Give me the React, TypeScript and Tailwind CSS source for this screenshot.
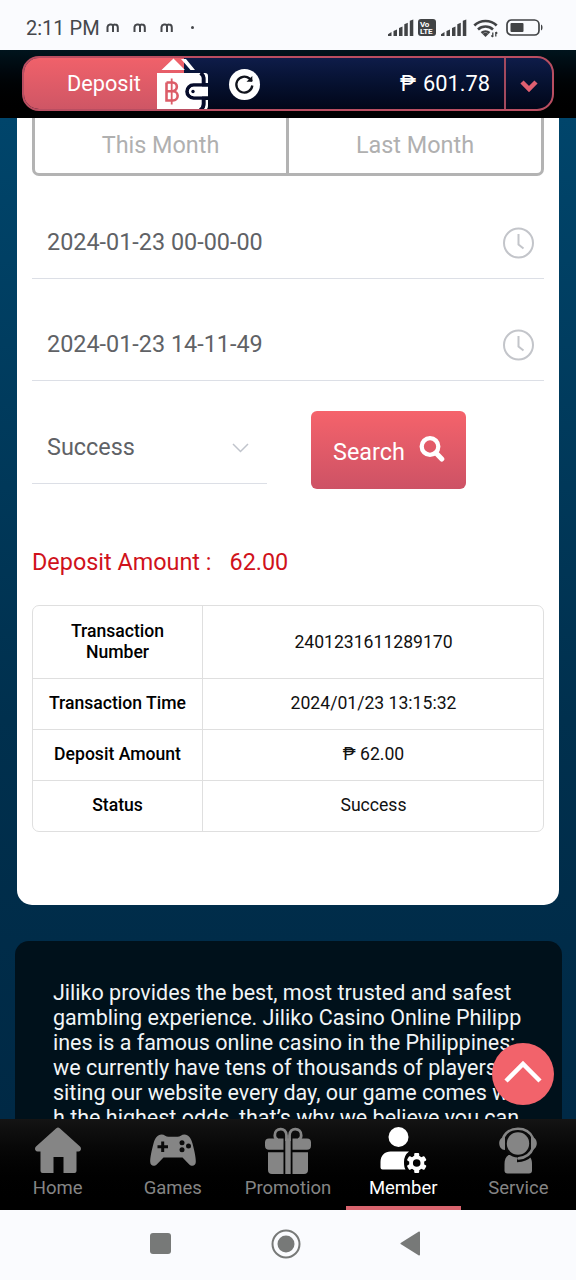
import React from 'react';

const tabs = [
  { label: 'Home', icon: HomeIcon },
  { label: 'Games', icon: GamesIcon },
  { label: 'Promotion', icon: GiftIcon },
  { label: 'Member', icon: MemberIcon, active: true },
  { label: 'Service', icon: ServiceIcon }
];

const rows = [
  { label: 'Transaction Number', value: '2401231611289170', height: 'h-[72px]' },
  { label: 'Transaction Time', value: '2024/01/23 13:15:32', height: 'h-[51px]' },
  { label: 'Deposit Amount', value: '₱ 62.00', height: 'h-[51px]' },
  { label: 'Status', value: 'Success', height: 'h-[51px]' }
];

const aboutLines = [
  'Jiliko provides the best, most trusted and safest',
  'gambling experience. Jiliko Casino Online Philipp',
  'ines is a famous online casino in the Philippines;',
  'we currently have tens of thousands of players vi',
  'siting our website every day, our game comes wit',
  'h the highest odds, that’s why we believe you can'
];

function HomeIcon() {
  return (
    <svg width="48" height="48" viewBox="0 0 48 48" fill="currentColor">
      <path d="M22.300 1.300a2.500 2.500 0 0 1 3.400 0L46 19.500c1.700 1.600 1.200 5-1.500 5H42.500V44a2 2 0 0 1-2 2H29.500V30h-10v16H8.500a2 2 0 0 1-2-2V24.500H3.500c-2.700 0-3.200-3.400-1.500-5Z" />
    </svg>
  );
}

function GamesIcon() {
  return (
    <svg width="48" height="48" viewBox="0 0 48 48">
      <path fill="currentColor" d="M12.500 7.500c3 0 4.500 2.300 7 2.300h9c2.500 0 4-2.300 7-2.300 4 0 6.500 3.500 8 9 1.700 6.500 3.500 14 3.300 18.500-.2 4-4 5-6.800 2.200L33.500 30.500h-19L8 37.200c-2.800 2.800-6.600 1.800-6.800-2.200C1 30.500 2.800 23 4.500 16.500c1.500-5.500 4-9 8-9Z" />
      <path stroke="#0b0b0b" strokeWidth="3" d="M13.700 14.500v10.500M8.500 19.800h10.500" />
      <g fill="#0b0b0b">
        <circle cx="33" cy="15.700" r="2.500" />
        <circle cx="33" cy="22.800" r="2.500" />
        <circle cx="39.500" cy="19" r="2.500" />
      </g>
    </svg>
  );
}

function GiftIcon() {
  return (
    <svg width="48" height="48" viewBox="0 0 48 48" fill="currentColor">
      <path fill="none" stroke="currentColor" strokeWidth="2.800" d="M22.500 14V8.500c0-9-12-8-11.700 0 0 2 1 3.500 3 4M25.500 14V8.500c0-9 12-8 11.700 0 0 2-1 3.500-3 4" />
      <path d="M5 11.500h14.500v11.300H5a4 4 0 0 1-4-4v-3.300a4 4 0 0 1 4-4ZM28.500 11.500H43a4 4 0 0 1 4 4v3.300a4 4 0 0 1-4 4H28.500ZM4 25.300h15.500V47H8a4 4 0 0 1-4-4ZM28.500 25.300H44V43a4 4 0 0 1-4 4H28.500ZM21.300 11.500h5.400V47h-5.400Z" />
    </svg>
  );
}

function MemberIcon() {
  return (
    <svg width="48" height="48" viewBox="0 0 48 48">
      <circle cx="19.500" cy="10" r="10" fill="currentColor" />
      <path fill="currentColor" d="M11.500 24.500H30a13 13 0 0 0-5 10.500c0 3 .3 5.500 1.500 7.500H3.500a2 2 0 0 1-2-2v-5.500c0-6.500 4.500-10.500 10-10.500Z" />
      <g transform="translate(37.700 36)" fill="currentColor">
        <circle r="5.700" fill="none" stroke="currentColor" strokeWidth="3.800" />
        <rect x="-2.500" y="-10" width="5" height="5" rx="1" />
        <rect x="-2.500" y="-10" width="5" height="5" rx="1" transform="rotate(60)" />
        <rect x="-2.500" y="-10" width="5" height="5" rx="1" transform="rotate(120)" />
        <rect x="-2.500" y="-10" width="5" height="5" rx="1" transform="rotate(180)" />
        <rect x="-2.500" y="-10" width="5" height="5" rx="1" transform="rotate(240)" />
        <rect x="-2.500" y="-10" width="5" height="5" rx="1" transform="rotate(300)" />
      </g>
    </svg>
  );
}

function ServiceIcon() {
  return (
    <svg width="48" height="48" viewBox="0 0 48 48">
      <path fill="currentColor" d="M14.500 28h19c3.500 2 4.500 5 4.500 9v6.500a3 3 0 0 1-3 3H13.500a3 3 0 0 1-3-3V37c0-4 1-7 4-9Z" />
      <circle cx="24" cy="16.500" r="14" fill="#0b0b0b" />
      <circle cx="24" cy="16.500" r="11.200" fill="currentColor" />
      <path fill="none" stroke="currentColor" strokeWidth="2.400" d="M9 11C12 4.500 17.500 1.700 24 1.700S36 4.500 39 11" />
      <path fill="currentColor" d="M11 9.500v13.500C7.500 23 5.200 20 5.200 16.300S7.500 10 11 9.500ZM37 9.500v13.500c3.500 0 5.800-3 5.800-6.700S40.500 10 37 9.500Z" />
      <path fill="none" stroke="#080808" strokeWidth="6.500" d="M35.500 27c-3 3.500-6.500 5-12.500 5" />
      <path fill="none" stroke="currentColor" strokeWidth="2.700" strokeLinecap="round" d="M39 21c-2.500 6.500-7 9.800-14.500 10.300" />
    </svg>
  );
}

function WalletIcon() {
  return (
    <svg width="52" height="52" viewBox="0 0 52 52">
      <path fill="#fff" d="M16.500.500 28 12H4.500ZM24 1h5l9 11h-4.500Z" />
      <path fill="#fff" d="M0 15h43a3 3 0 0 1 2 1v36H0Z" />
      <path fill="#fff" d="M46 15h2a3 3 0 0 1 3 3v7h-2.500v-4c0-3-1-4.500-2.500-6ZM48.500 42H51v6a4 4 0 0 1-4 4h-1c2-2 2.500-4 2.500-6Z" />
      <path fill="none" stroke="#060c2b" strokeWidth="3.600" d="M43.500 15c2 1.500 3 3 3 5v7H36.500a6.500 6.500 0 0 0 0 13h10v6c0 3-1 4.500-3.500 6" />
      <path fill="#fff" d="M37 28.800h14v9.400H37a4.700 4.700 0 0 1 0-9.400Z" />
      <circle cx="36" cy="33.500" r="1.700" fill="#060c2b" />
      <path fill="none" stroke="#dc5d68" strokeWidth="2.600" d="M9.500 24.500h6a4.300 4.300 0 0 1 0 8.700H9.500h6.500a4.600 4.600 0 0 1 0 9.300H9.500V24.500" />
      <path stroke="#dc5d68" strokeWidth="1.800" d="M14.700 20.500v26" />
    </svg>
  );
}

function SignalIcon() {
  return (
    <svg width="26" height="17" viewBox="0 0 26 17" fill="#414345">
      <path d="M0 17v-1.700l3.500-2.300V17ZM5.500 17v-5L9 10.500V17ZM11 17V9l3.500-1.500V17ZM16.300 17V5.300l3.500-1.500V17ZM21.800 17V1.700L25.300.500V17Z" />
    </svg>
  );
}

function StatusBar() {
  return (
    <div className="h-[50px] shrink-0 bg-[#fafbfe] flex items-center justify-between pl-[26px] pr-[32px] pt-[5px] text-[#45474b]">
      <div className="flex items-center">
        <span className="text-[20px] w-[80px] whitespace-nowrap">2:11 PM</span>
        {[0, 1, 2].map((i) => (
          <svg key={i} className="mr-[14px]" width="13" height="9" viewBox="0 0 13 9" fill="none" stroke="#45474b" strokeWidth="2">
            <path d="M1.500 9V4a3 3 0 0 1 2.500-2.500h1A2 2 0 0 1 7 4v5M7 4a2 2 0 0 1 2-2.500c2 0 2.800 1 2.800 3V9" />
          </svg>
        ))}
        <span className="w-[3px] h-[3px] rounded-full bg-[#45474b] ml-[4px]" />
      </div>
      <div className="flex items-center">
        <SignalIcon />
        <span className="ml-1 w-[18px] h-[17px] rounded-[3px] bg-[#414345] text-white text-[8px] leading-[7px] font-bold flex flex-col justify-center pl-[2px] tracking-tight">
          <span>Vo</span>
          <span>LTE</span>
        </span>
        <span className="ml-[5px]"><SignalIcon /></span>
        <svg className="ml-[6px]" width="26" height="20" viewBox="0 0 26 20" fill="none" stroke="#414345" strokeWidth="2.600">
          <path d="M1.300 7.500a16 16 0 0 1 22.400 0M5 11.500a11 11 0 0 1 15 0M8.500 15a6 6 0 0 1 8 0" />
          <path fill="#414345" stroke="none" d="m12.500 19-3-3a4 4 0 0 1 6 0Z" />
          <path strokeWidth="1.300" d="M19.800 19v-4.500M22.800 14v4.500M18.300 17.500l1.500 1.500M22.800 14l1.500 1.500" />
        </svg>
        <svg className="ml-[7px]" width="38" height="17" viewBox="0 0 38 17">
          <rect x="1" y="1" width="32" height="15" rx="4.500" fill="none" stroke="#414345" strokeWidth="1.700" />
          <rect x="4.500" y="4" width="13" height="9" rx="1" fill="#414345" />
          <path d="M35 5.500c2 .5 2 5.500 0 6Z" fill="#414345" />
        </svg>
      </div>
    </div>
  );
}

function BalanceBar() {
  return (
    <header className="h-[68px] shrink-0 bg-gradient-to-b from-[#00141d] to-black pt-[6px] pl-[22px] pr-[22px]">
      <div className="relative h-[55px] flex items-center rounded-[17px] border-2 border-[#b94e61] bg-gradient-to-b from-[#0e1c49] to-[#020719] overflow-hidden">
        <div className="h-full w-[160px] bg-gradient-to-b from-[#f0616a] to-[#cf5665] pl-[43px] flex items-center pt-[2px] text-[21.700px] text-white">
          Deposit
        </div>
        <div className="absolute left-[133px] top-0">
          <WalletIcon />
        </div>
        <div className="ml-[45px] mt-px w-[31px] h-[31px] rounded-full bg-white flex items-center justify-center">
          <svg width="21" height="21" viewBox="0 0 21 21" fill="none" stroke="#10131c" strokeWidth="2.300">
            <path d="M18.300 11.500A8 8 0 1 1 15.500 4.500L18 7" />
            <path d="M18.300 2v5.800H12.500Z" fill="#10131c" stroke="none" />
          </svg>
        </div>
        <div className="ml-auto mr-[14px] pt-[2px] text-[21.800px] text-white whitespace-nowrap flex">
          <span className="mr-[7px]">₱</span>
          <span>601.78</span>
        </div>
        <div className="h-full w-[48px] border-l-2 border-[#a2495e] flex items-center justify-center pt-1">
          <svg width="18" height="14" viewBox="0 0 18 14" fill="none" stroke="#e05f70" strokeWidth="4.500">
            <path d="m2 3 7 7 7-7" />
          </svg>
        </div>
      </div>
    </header>
  );
}

function DateField({ value }: { value: string }) {
  return (
    <div className="h-[72px] border-b border-[#dcdfe6] flex items-center justify-between pl-[15px] pr-[9px] text-[23.400px] text-[#606266]">
      <span>{value}</span>
      <svg width="33" height="33" viewBox="0 0 33 33" fill="none" stroke="#c3c5ca" strokeWidth="2">
        <circle cx="16.500" cy="17" r="14.500" />
        <path d="M16.500 8V18.500l5 4" />
      </svg>
    </div>
  );
}

function RecordPanel() {
  return (
    <section className="h-[787px] mx-[17px] bg-white rounded-b-[15px] px-[15px]">
      <div className="h-[58px] flex border-[3px] border-t-0 border-[#b3b3b3] rounded-b-[7px] text-[23.400px] text-[#b0b0b0] text-center leading-[54px]">
        <div className="w-[254px] border-r-[3px] border-[#b3b3b3]">This Month</div>
        <div className="flex-1">Last Month</div>
      </div>
      <div className="mt-[31px]">
        <DateField value="2024-01-23 00-00-00" />
      </div>
      <div className="mt-[30px]">
        <DateField value="2024-01-23 14-11-49" />
      </div>
      <div className="mt-[30px] flex items-start">
        <div className="w-[235px] h-[73px] border-b border-[#dcdfe6] flex items-center justify-between pl-[15px] pr-[18px] pt-px text-[23.400px] text-[#606266]">
          <span>Success</span>
          <svg width="17" height="10" viewBox="0 0 17 10" fill="none" stroke="#c0c4cc" strokeWidth="1.500">
            <path d="m1 1 7.500 7.500L16 1" />
          </svg>
        </div>
        <button className="ml-[44px] w-[155px] h-[78px] rounded-[6px] bg-gradient-to-b from-[#f5636b] to-[#cd5265] text-white text-[23.400px] flex items-center pl-[22px] pt-[5px]">
          Search
          <svg className="ml-[14px] mb-[8px]" width="26" height="26" viewBox="0 0 26 26" fill="none" stroke="#fff">
            <circle cx="11" cy="10.500" r="8.300" strokeWidth="4.300" />
            <path d="m17 17 5.800 6" strokeWidth="5" strokeLinecap="round" />
          </svg>
        </button>
      </div>
      <div className="mt-[56px] h-[34px] leading-[34px] text-[23.400px] text-[#d0121b] whitespace-pre">
        Deposit Amount :<span className="ml-[18px]">62.00</span>
      </div>
      <div className="mt-[26px] border border-[#dfdfdf] rounded-[7px] text-[17.600px] text-[#111] leading-[21px]">
        {rows.map((row, index) => (
          <div key={index} className={`flex ${row.height} ${index > 0 ? 'border-t border-[#dfdfdf]' : ''}`}>
            <div className={`w-[170px] border-r border-[#dfdfdf] px-3 flex items-center justify-center text-center font-medium text-black ${index > 0 ? 'pb-[2px]' : ''}`}>
              {row.label}
            </div>
            <div className={`flex-1 pl-px flex items-center justify-center ${index > 0 ? 'pb-[2px]' : ''}`}>{row.value}</div>
          </div>
        ))}
      </div>
    </section>
  );
}

function AboutPanel() {
  return (
    <section className="mt-[36px] ml-[15px] mr-[14px] h-[400px] rounded-t-[14px] bg-[#00111b] pl-[38px] pt-[39px] text-[21.520px] leading-[25px] text-[#f1f5f7] whitespace-nowrap">
      {aboutLines.map((line, index) => (
        <p key={index}>{line}</p>
      ))}
    </section>
  );
}

function TabBar() {
  return (
    <nav className="h-[91px] shrink-0 flex bg-gradient-to-b from-[#141414] to-black text-[18.500px]">
      {tabs.map((tab) => (
        <div
          key={tab.label}
          className={`flex-1 flex flex-col items-center pt-[8px] border-b-4 ${tab.active ? 'text-white border-[#d9646e]' : 'text-[#858585] border-transparent'}`}
        >
          <tab.icon />
          <span className="leading-[26px]">{tab.label}</span>
        </div>
      ))}
    </nav>
  );
}

function SystemNav() {
  return (
    <div className="h-[70px] shrink-0 bg-[#fafbfe] flex items-center justify-between pl-[150px] pr-[156px] pb-[3px]">
      <span className="w-[21px] h-[21px] rounded-[3px] bg-[#777978]" />
      <svg width="30" height="30" viewBox="0 0 30 30">
        <circle cx="15" cy="15" r="13.500" fill="none" stroke="#777978" strokeWidth="2" />
        <circle cx="15" cy="15" r="8.500" fill="#777978" />
      </svg>
      <svg width="20" height="25" viewBox="0 0 20 25" fill="#777978">
        <path d="M18.500.8c.8-.5 1.500 0 1.500.8v22c0 .8-.7 1.200-1.500.7L1 13.300c-.8-.5-.8-1 0-1.500Z" />
      </svg>
    </div>
  );
}

export default function App() {
  return (
    <div className="relative w-[576px] h-[1280px] overflow-hidden flex flex-col font-['Roboto',sans-serif]">
      <StatusBar />
      <BalanceBar />
      <main className="h-[1001px] shrink-0 overflow-hidden bg-gradient-to-b from-[#00456b] via-[#00304e] via-60% to-[#002945]">
        <RecordPanel />
        <AboutPanel />
      </main>
      <TabBar />
      <SystemNav />
      <button className="absolute left-[492px] top-[1043px] w-[62px] h-[62px] rounded-full bg-[#f2636b] flex items-center justify-center pb-1">
        <svg width="38" height="24" viewBox="0 0 38 24" fill="none" stroke="#fff" strokeWidth="4.500">
          <path d="m2 21 17-17 17 17" />
        </svg>
      </button>
    </div>
  );
}
